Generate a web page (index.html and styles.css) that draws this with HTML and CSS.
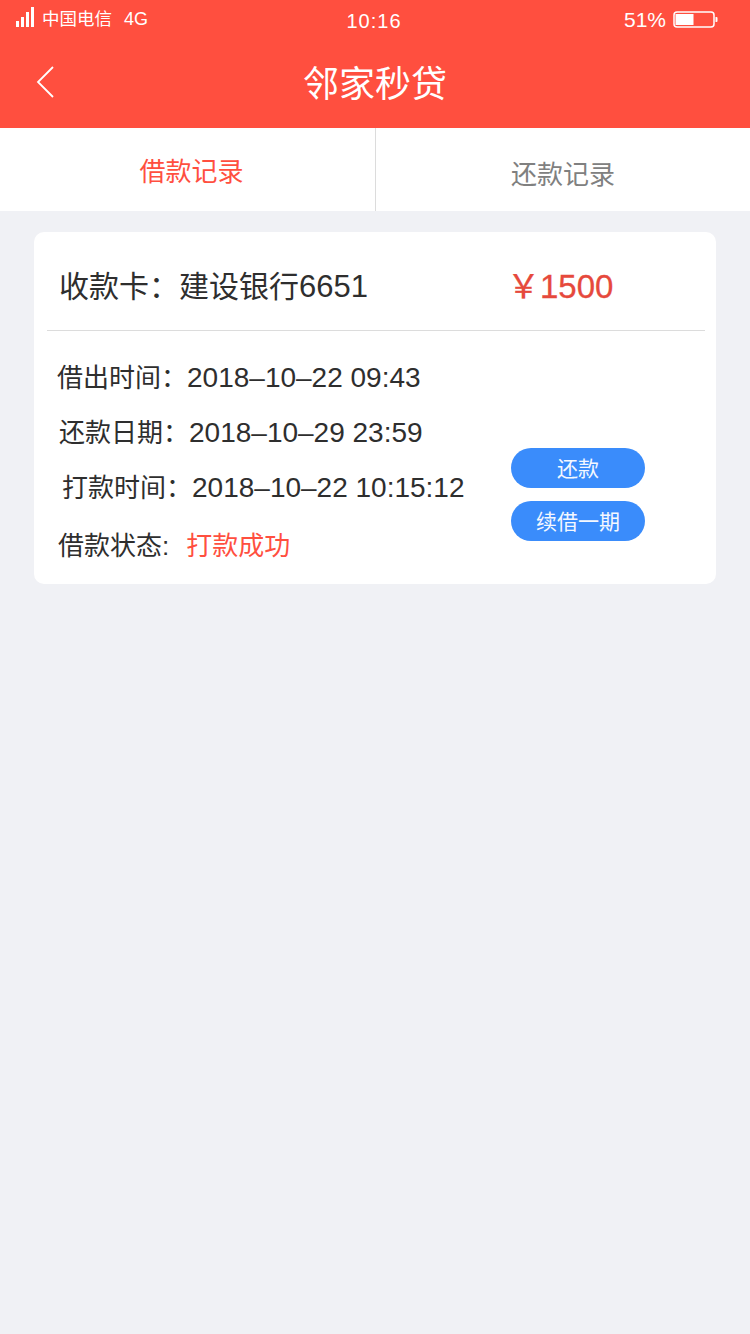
FILE: index.html
```html
<!DOCTYPE html>
<html lang="zh-CN">
<head>
<meta charset="utf-8">
<title>邻家秒贷</title>
<link rel="stylesheet" href="styles.css">
</head>
<body>
<header class="head">
  <div class="status">
    <div class="status-left">
      <svg class="signal" width="18" height="20" viewBox="0 0 18 20" aria-hidden="true"><path d="M0 14h3v6H0zM5 10h3v10H5zM10 5h3v15h-3zM15 0h3v20h-3z" fill="#fff"/></svg>
      <span class="carrier">中国电信</span><span class="net">4G</span>
    </div>
    <div class="clock">10:16</div>
    <div class="status-right">
      <span class="pct">51%</span>
      <svg class="battery" width="45" height="18" viewBox="0 0 45 18" aria-hidden="true"><rect x="1" y="1" width="40" height="15" rx="3" fill="none" stroke="#fff" stroke-width="1.500"/><rect x="2.500" y="3" width="18" height="11" fill="#fff"/><path d="M42.500 6h1a1 1 0 0 1 1 1v3a1 1 0 0 1-1 1h-1z" fill="#fff"/></svg>
    </div>
  </div>
  <div class="nav">
    <svg class="back" width="18" height="32" viewBox="0 0 18 32" aria-hidden="true"><path d="M17 1 2 16l15 15" fill="none" stroke="#fff" stroke-width="1.800"/></svg>
    <h1 class="title">邻家秒贷</h1>
  </div>
</header>
<nav class="tabs">
  <div class="tab tab-on">借款记录</div>
  <div class="tab tab-off">还款记录</div>
</nav>
<main class="page">
  <section class="card">
    <div class="card-top">
      <div class="bank">收款卡：建设银行<span class="bank-no">6651</span></div>
      <div class="amount">￥1500</div>
    </div>
    <div class="card-body">
      <div class="rows">
        <div class="row row-a">借出时间：<span class="num">2018–10–22 09:43</span></div>
        <div class="row row-b">还款日期：<span class="num">2018–10–29 23:59</span></div>
        <div class="row row-c">打款时间：<span class="num">2018–10–22 10:15:12</span></div>
        <div class="row row-d">借款状态:<span class="ok">打款成功</span></div>
      </div>
      <div class="actions">
        <button class="btn">还款</button>
        <button class="btn">续借一期</button>
      </div>
    </div>
  </section>
</main>
</body>
</html>
```
FILE: styles.css
```css
* { box-sizing: border-box; }
html, body { margin: 0; height: 100%; }
body {
  width: 750px;
  min-height: 1334px;
  background: #f0f1f5;
  font-family: "Liberation Sans", "Noto Sans CJK SC", sans-serif;
  color: #2e2e2e;
  display: flex;
  flex-direction: column;
}
.head { background: #ff4f3f; color: #fff; height: 128px; display: flex; flex-direction: column; }
.status { height: 40px; padding: 7px 32px 0 16px; display: grid; grid-template-columns: 1fr auto 1fr; font-size: 18px; }
.status-left { display: flex; align-items: flex-start; }
.signal { flex: none; }
.carrier { margin-left: 8px; line-height: 25px; font-size: 17.500px; }
.net { margin-left: 12px; line-height: 25px; }
.clock { font-size: 20px; line-height: 28px; letter-spacing: 1px; margin-left: 14px; }
.status-right { display: flex; justify-content: flex-end; align-items: flex-start; }
.pct { font-size: 21px; line-height: 25px; margin-right: 7px; }
.battery { margin-top: 4px; }
.nav { height: 88px; position: relative; display: flex; align-items: center; justify-content: center; }
.back { position: absolute; left: 36px; top: 26px; }
.title { margin: 0; font-size: 36px; line-height: 88px; font-weight: 400; position: relative; top: 1px; }
.tabs { height: 83px; background: #fff; display: flex; }
.tab { flex: 0 0 50%; text-align: center; font-size: 26px; }
.tab-on { color: #ff4f3f; line-height: 89px; padding-left: 8px; }
.tab-off { color: #808080; line-height: 94px; border-left: 1px solid #dcdcdc; }
.page { flex: 1; padding: 21px 34px; }
.card { background: #fff; border-radius: 10px; height: 352px; display: flex; flex-direction: column; }
.card-top { height: 99px; margin: 0 11px 0 13px; padding: 0 0 0 12px; border-bottom: 1px solid #dcdcdc; display: flex; align-items: center; font-size: 30px; }
.bank { width: 448px; line-height: 110px; height: 99px; white-space: nowrap; }
.bank-no { font-size: 31px; }
.amount { color: #e6493c; font-size: 33px; line-height: 110px; height: 99px; -webkit-text-stroke: 0.3px #e6493c; }
.card-body { flex: 1; display: flex; }
.rows { width: 477px; padding-top: 19px; font-size: 26px; }
.row { height: 55px; line-height: 55px; white-space: nowrap; }
.num { font-size: 28px; }
.row-a { padding-left: 23px; }
.row-b { padding-left: 25px; }
.row-c { padding-left: 28px; }
.row-d { padding-left: 24px; line-height: 62px; }
.ok { color: #ff4f3f; margin-left: 17px; }
.actions { padding-top: 117px; display: flex; flex-direction: column; gap: 13px; }
.btn { width: 134px; height: 40px; border: 0; padding: 2px 0 0; border-radius: 20px; background: #3a8cfb; color: #f4f8ff; font: inherit; font-size: 21px; line-height: 38px; }
```
